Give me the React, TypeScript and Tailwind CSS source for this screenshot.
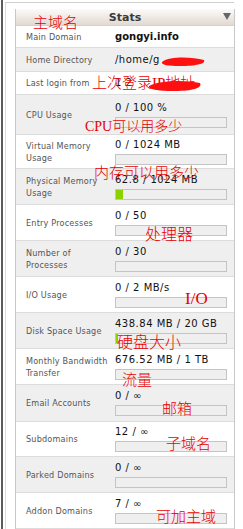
import React from "react";

type Row = {
  label: string[];
  value: React.ReactNode;
  bar?: number | null;
  h: number;
  gray: boolean;
  bold?: boolean;
};

const rows: Row[] = [
  { label: ["Main Domain"], value: "gongyi.info", bar: null, h: 22, gray: false, bold: true },
  { label: ["Home Directory"], value: "/home/g", bar: null, h: 24, gray: true },
  { label: ["Last login from"], value: "1 2", bar: null, h: 23, gray: false },
  { label: ["CPU Usage"], value: "0 / 100 %", bar: 0, h: 40, gray: true },
  { label: ["Virtual Memory", "Usage"], value: "0 / 1024 MB", bar: 0, h: 34, gray: false },
  { label: ["Physical Memory", "Usage"], value: "62.8 / 1024 MB", bar: 7, h: 36, gray: true },
  { label: ["Entry Processes"], value: "0 / 50", bar: 0, h: 36, gray: false },
  { label: ["Number of", "Processes"], value: "0 / 30", bar: 0, h: 36, gray: true },
  { label: ["I/O Usage"], value: "0 / 2 MB/s", bar: 0, h: 36, gray: false },
  { label: ["Disk Space Usage"], value: "438.84 MB / 20 GB", bar: 2, h: 36, gray: true },
  { label: ["Monthly Bandwidth", "Transfer"], value: "676.52 MB / 1 TB", bar: 0, h: 36, gray: false },
  { label: ["Email Accounts"], value: "0 / ∞", bar: 0, h: 37, gray: true },
  { label: ["Subdomains"], value: "12 / ∞", bar: 0, h: 35, gray: false },
  { label: ["Parked Domains"], value: "0 / ∞", bar: 0, h: 36, gray: true },
  { label: ["Addon Domains"], value: "7 / ∞", bar: 0, h: 36, gray: false },
];

const notes: { t: string; x: number; y: number; s?: number }[] = [
  { t: "主域名", x: 33, y: 16, s: 15 },
  { t: "上次登录IP地址", x: 92, y: 76, s: 15 },
  { t: "CPU可以用多少", x: 85, y: 120, s: 14 },
  { t: "内存可以用多少", x: 94, y: 166, s: 15 },
  { t: "处理器", x: 145, y: 227, s: 16 },
  { t: "I/O", x: 185, y: 290, s: 17 },
  { t: "硬盘大小", x: 117, y: 335, s: 16 },
  { t: "流量", x: 122, y: 373, s: 15 },
  { t: "邮箱", x: 162, y: 402, s: 15 },
  { t: "子域名", x: 166, y: 437, s: 15 },
  { t: "可加主域", x: 156, y: 510, s: 15 },
];

function StatRow({ r }: { r: Row }) {
  return (
    <div
      className={`flex items-stretch border-b border-[#dcdcdc] box-border ${r.gray ? "bg-[#efefef]" : "bg-white"}`}
      style={{ height: r.h }}
    >
      <div className="w-[99px] shrink-0 pl-[10px] flex flex-col justify-center text-[9px] leading-[12px] text-[#555] font-['DejaVu_Sans_Condensed','Liberation_Sans',sans-serif] tracking-[0.2px]">
        {r.label.map((l) => (
          <div key={l}>{l}</div>
        ))}
      </div>
      <div className="flex-1 flex flex-col justify-center pr-[7px]">
        <div
          className={`font-['DejaVu_Sans',sans-serif] leading-[12px] text-[#111] whitespace-nowrap ${
            r.bold ? "font-bold text-[10px]" : "text-[10px] tracking-[0.5px]"
          }`}
        >
          {r.value}
        </div>
        {r.bar !== null && r.bar !== undefined && (
          <div className="mt-[3px] h-[11px] w-[112px] border border-[#c4c4c4] bg-[#efefef] box-border">
            {r.bar > 0 && <div className="h-full bg-[#8ad300]" style={{ width: r.bar }} />}
          </div>
        )}
      </div>
    </div>
  );
}

export default function App() {
  return (
    <div className="relative w-[243px] h-[529px] bg-white overflow-hidden flex">
      <div className="w-[2px] ml-[1px] bg-[#5c5c5c] shrink-0" />
      <div className="flex-1 flex flex-col">
        <div className="mt-[2px] ml-[2px] w-[229px] h-[1px] bg-[#cfcfcf]" />
        <div className="flex flex-1">
          <div className="w-[1px] ml-[2px] bg-[#dedede] shrink-0" />
          <div className="ml-[9px] mt-[6px] w-[220px] border-l border-r border-[#c8c8c8] flex flex-col">
            <div className="h-[17px] bg-linear-to-b from-[#fcfbfa] to-[#e2d9d1] flex items-center justify-center relative border-b border-[#d6d0ca]">
              <span className="font-['DejaVu_Sans',sans-serif] font-bold text-[11px] text-[#3a3a3a] leading-none">
                Stats
              </span>
              <svg className="absolute right-[3px] top-[4px]" width="8" height="7" viewBox="0 0 8 7">
                <polygon points="0,0 8,0 4,7" fill="#666" />
              </svg>
            </div>
            {rows.map((r) => (
              <StatRow key={r.label.join(" ")} r={r} />
            ))}
          </div>
        </div>
      </div>

      {notes.map((n) => (
        <div
          key={n.t}
          className="absolute text-[#e60000] leading-none whitespace-nowrap font-['Liberation_Serif','Noto_Sans_CJK_SC',serif] font-light"
          style={{ left: n.x, top: n.y, fontSize: n.s }}
        >
          {n.t}
        </div>
      ))}

      {/* red scribbles */}
      <svg className="absolute left-0 top-0 pointer-events-none" width="243" height="529">
        <path d="M162 62 C 170 56, 192 57, 204 60 C 206 64, 195 66, 180 66 C 168 66, 161 65, 162 62 Z" fill="#ff1010" />
        <path d="M149 86 C 160 80, 186 80, 200 83 C 203 88, 192 91, 175 91 C 161 91, 148 90, 149 86 Z" fill="#ff1010" />
      </svg>
    </div>
  );
}
